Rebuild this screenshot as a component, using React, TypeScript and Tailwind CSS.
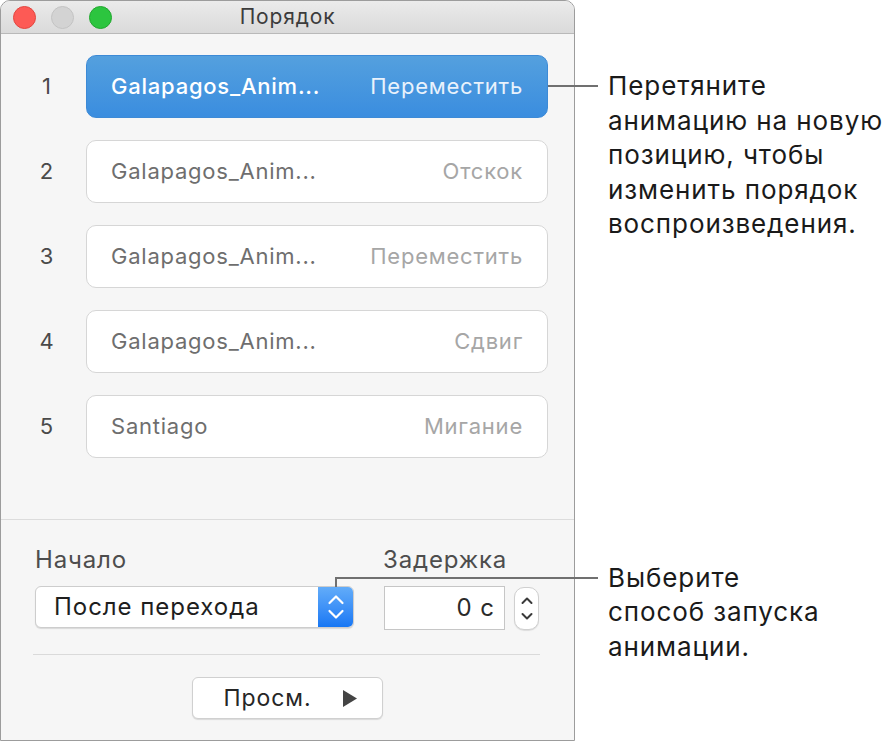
import React from "react";

interface AnimRow {
  n: number;
  name: string;
  effect: string;
  active?: boolean;
}

const ROWS: AnimRow[] = [
  { n: 1, name: "Galapagos_Anim...", effect: "Переместить", active: true },
  { n: 2, name: "Galapagos_Anim...", effect: "Отскок" },
  { n: 3, name: "Galapagos_Anim...", effect: "Переместить" },
  { n: 4, name: "Galapagos_Anim...", effect: "Сдвиг" },
  { n: 5, name: "Santiago", effect: "Мигание" },
];

// up/down arrows of the popup button
function PopupChevrons() {
  return (
    <svg width="18" height="28" viewBox="0 0 18 28" fill="none">
      <path d="M2.5 10 L9 3.5 L15.5 10" stroke="#ffffff" strokeWidth="2.2" strokeLinecap="round" strokeLinejoin="round" />
      <path d="M2.5 18 L9 24.5 L15.5 18" stroke="#ffffff" strokeWidth="2.2" strokeLinecap="round" strokeLinejoin="round" />
    </svg>
  );
}

// up/down arrows of the stepper
function StepperChevrons() {
  return (
    <svg width="14" height="30" viewBox="0 0 14 30" fill="none">
      <path d="M2.5 9 L7 4.5 L11.5 9" stroke="#3a3a3a" strokeWidth="2" strokeLinecap="round" strokeLinejoin="round" />
      <path d="M2.5 20 L7 24.5 L11.5 20" stroke="#3a3a3a" strokeWidth="2" strokeLinecap="round" strokeLinejoin="round" />
    </svg>
  );
}

function Row({ row }: { row: AnimRow }) {
  return (
    <div className="flex items-center h-[63px]">
      <div className="w-[85px] pl-[6px] text-center text-[22px] text-[#4a4a4a]">{row.n}</div>
      {row.active ? (
        <div className="w-[462px] h-full rounded-[10px] border border-[#3d8ad6] bg-gradient-to-b from-[#54a0de] to-[#3a8ddf] flex items-center justify-between px-[24px] text-[22px] tracking-[0.035em]">
          <span className="text-white font-medium">{row.name}</span>
          <span className="text-[#e9f2fc]">{row.effect}</span>
        </div>
      ) : (
        <div className="w-[462px] h-full rounded-[10px] border border-[#d6d6d6] bg-white flex items-center justify-between px-[24px] text-[22px] tracking-[0.035em]">
          <span className="text-[#6e6e6e]">{row.name}</span>
          <span className="text-[#a6a6a6]">{row.effect}</span>
        </div>
      )}
    </div>
  );
}

function OrderWindow() {
  return (
    <div className="w-[575px] h-[741px] shrink-0 border border-[#9c9c9c] rounded-t-[10px] bg-[#f6f6f6] flex flex-col overflow-hidden">
      {/* title bar */}
      <div className="relative h-[33px] shrink-0 bg-gradient-to-b from-[#ebebeb] to-[#dadada] border-b border-[#b9b9b9] flex items-center">
        <div className="flex items-center gap-[15px] pl-[12px]">
          <span className="w-[23px] h-[23px] rounded-full bg-[#fd5a55] border border-[#e2463f]" />
          <span className="w-[23px] h-[23px] rounded-full bg-[#d3d3d3] border border-[#c3c3c3]" />
          <span className="w-[23px] h-[23px] rounded-full bg-[#2cc53f] border border-[#22a72f]" />
        </div>
        <div className="absolute inset-0 flex items-center justify-center text-[21px] text-[#3c3c3c] tracking-[0.04em]">
          Порядок
        </div>
      </div>

      {/* list */}
      <div className="h-[486px] shrink-0 flex flex-col gap-[22px] pt-[21px] border-b border-[#dcdcdc]">
        {ROWS.map((r) => (
          <Row key={r.n} row={r} />
        ))}
      </div>

      {/* controls */}
      <div className="flex-1 flex flex-col pl-[34px] pt-[26px]">
        <div className="flex text-[24px] text-[#4d4d4d] leading-[28px] tracking-[0.035em]">
          <span className="w-[348px]">Начало</span>
          <span>Задержка</span>
        </div>
        <div className="flex items-start mt-[12px]">
          <div className="w-[319px] h-[42px] rounded-[6px] bg-white border border-[#cdcdcd] shadow-[0_1px_1px_rgba(0,0,0,0.12)] flex overflow-hidden">
            <div className="flex-1 flex items-center pl-[18px] text-[24px] text-[#1e1e1e] tracking-[0.04em]">После перехода</div>
            <div className="w-[35px] h-full bg-gradient-to-b from-[#62acf9] to-[#1677f4] flex items-center justify-center">
              <PopupChevrons />
            </div>
          </div>
          <div className="ml-[30px] w-[121px] h-[44px] bg-white border border-[#c6c6c6] flex items-center justify-end pr-[9px] text-[24px] text-[#2a2a2a] tracking-[0.04em]">
            0 с
          </div>
          <div className="ml-[9px] mt-[1px] w-[25px] h-[43px] rounded-[10px] bg-white border border-[#d0d0d0] shadow-[0_1px_1px_rgba(0,0,0,0.1)] flex items-center justify-center">
            <StepperChevrons />
          </div>
        </div>
        <div className="mt-[24px] w-[507px] -ml-[2px] h-px bg-[#dadada]" />
        <div className="flex justify-center pr-[34px] mt-[22px]">
          <div className="w-[191px] h-[42px] rounded-[6px] bg-white border border-[#d0d0d0] shadow-[0_1px_1px_rgba(0,0,0,0.12)] flex items-center justify-center gap-[32px] text-[23px] text-[#262626] tracking-[0.04em] pl-[6px]">
            <span>Просм.</span>
            <svg width="14" height="17" viewBox="0 0 14 17">
              <path d="M0 0 L14 8.5 L0 17 Z" fill="#444444" />
            </svg>
          </div>
        </div>
      </div>
    </div>
  );
}

export default function App() {
  return (
    <div className="relative w-[888px] h-[742px] bg-white overflow-hidden font-['Inter',sans-serif]">
      <div className="flex">
        <OrderWindow />
        <div className="flex flex-col pl-[33px] pt-[69px] text-[26px] leading-[34.5px] text-[#1a1a1a] tracking-[0.035em]">
          <p>
            Перетяните
            <br />
            анимацию на новую
            <br />
            позицию, чтобы
            <br />
            изменить порядок
            <br />
            воспроизведения.
          </p>
          <p className="mt-[319px]">
            Выберите
            <br />
            способ запуска
            <br />
            анимации.
          </p>
        </div>
      </div>

      {/* callout lines */}
      <div className="absolute left-[548px] top-[85px] w-[50px] h-[2px] bg-[#707070]" />
      <div className="absolute left-[335px] top-[577px] w-[263px] h-[2px] bg-[#707070]" />
      <div className="absolute left-[335px] top-[577px] w-[2px] h-[10px] bg-[#707070]" />
    </div>
  );
}
